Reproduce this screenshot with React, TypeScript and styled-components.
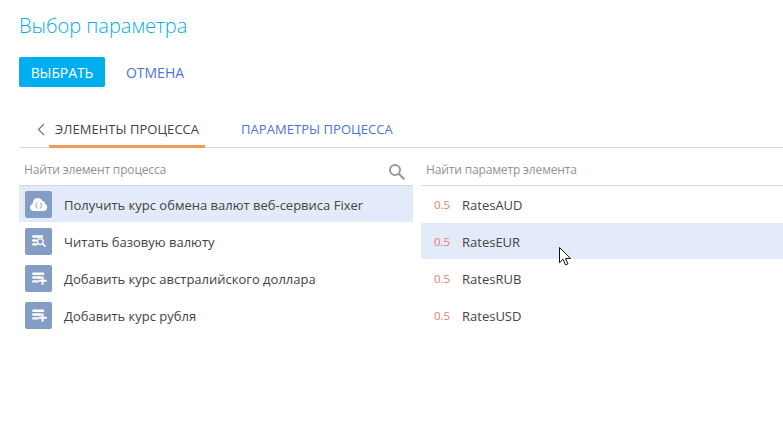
import React from 'react';
import styled, { createGlobalStyle } from 'styled-components';

const GlobalStyle = createGlobalStyle`
  * { box-sizing: border-box; }
  body { margin: 0; background: #fff; overflow: hidden; }
`;

const Page = styled.main`
  width: 100vw;
  height: 100vh;
  padding-left: 19px;
  overflow: hidden;
  font-family: 'Open Sans', sans-serif;
  font-size: 13px;
  color: #444;
`;

const Title = styled.h1`
  margin: 0;
  padding-top: 11px;
  height: 57px;
  font-size: 20px;
  line-height: 30px;
  font-weight: 300;
  color: #00aeef;
`;

const Actions = styled.div`
  display: flex;
  gap: 9px;
`;

const Button = styled.button<{ $primary?: boolean }>`
  width: ${(p) => (p.$primary ? 86 : 82)}px;
  height: 30px;
  padding: 2px 0 0;
  border: 0;
  border-radius: 2px;
  font: 14px/28px 'Open Sans', sans-serif;
  font-weight: ${(p) => (p.$primary ? 500 : 400)};
  white-space: nowrap;
  letter-spacing: ${(p) => (p.$primary ? -0.1 : 0)}px;
  color: ${(p) => (p.$primary ? '#fff' : '#4f74d9')};
  background: ${(p) => (p.$primary ? '#00aeef' : 'transparent')};
`;

const Tabs = styled.nav`
  display: flex;
  height: 36px;
  margin-top: 25px;
  padding-left: 17px;
  border-bottom: 1px solid #d9d9d9;
`;

const Back = styled.svg`
  width: 13px;
  height: 14px;
  margin-top: 10px;
`;

const Tab = styled.div<{ $active?: boolean }>`
  height: 36px;
  padding: 0 6px;
  line-height: 35px;
  white-space: nowrap;
  margin-right: 30px;
  letter-spacing: 0.04px;
  color: ${(p) => (p.$active ? '#444' : '#4f74d9')};
  border-bottom: 3px solid ${(p) => (p.$active ? '#f09a54' : 'transparent')};
`;

const Columns = styled.div`
  display: grid;
  grid-template-columns: 394px 1fr;
  column-gap: 8px;
`;

const Search = styled.div`
  display: flex;
  justify-content: space-between;
  height: 38px;
  padding: 0 7px 0 5px;
  border-bottom: 1px solid #d9d9d9;
  font-size: 12px;
  line-height: 44px;
  letter-spacing: -0.15px;
  color: #929292;
`;

const Lens = styled.svg`
  width: 18px;
  height: 18px;
  margin-top: 15px;
`;

const Row = styled.div<{ $selected?: boolean }>`
  display: flex;
  align-items: center;
  height: 36px;
  margin-bottom: 1px;
  padding-left: 6px;
  white-space: nowrap;
  background: ${(p) => (p.$selected ? '#e3eafa' : 'transparent')};
`;

const Tile = styled.svg`
  width: 27px;
  height: 27px;
  margin-right: 12px;
`;

const Kind = styled.span`
  width: 35px;
  padding-left: 7px;
  font-size: 11.5px;
  letter-spacing: -0.1px;
  color: #f1786b;
`;

const Label = styled.span`
  padding-top: 2px;
`;

const Pointer = styled.svg`
  position: absolute;
  left: 558px;
  top: 246px;
  width: 14px;
  height: 21px;
`;

type IconKind = 'cloud' | 'read' | 'add';

function ElementIcon({ kind }: { kind: IconKind }) {
  return (
    <Tile viewBox="0 0 27 27">
      <rect width="27" height="27" rx="2" fill="#849dc4" />
      {kind === 'cloud' && (
        <>
          <path d="M8.6 20C6.5 20 5 18.4 5 16.4c0-1.8 1.1-3.1 2.7-3.5C7.6 9.4 9.8 7 12.7 7c2.2 0 3.9 1.1 4.6 3.1 1.7.1 2.8 1.3 2.8 2.9 1.3.6 2.1 1.8 2.1 3.2 0 2.2-1.6 3.8-3.8 3.8z" fill="#fff" />
          <path d="M12.4 11.7c-1.1 0-1 .8-1 1.5s-.3 1.1-.9 1.3c.6.2.9.6.9 1.3s-.1 1.5 1 1.5M15 11.7c1.1 0 1 .8 1 1.5s.3 1.1.9 1.3c-.6.2-.9.6-.9 1.3s.1 1.5-1 1.5" fill="none" stroke="#849dc4" />
        </>
      )}
      {kind === 'read' && (
        <g fill="none" stroke="#fff">
          <path d="M8.2 8.5h9M8.2 12.5h2.6M8.2 16.4h3.4" strokeWidth="2.3" strokeLinecap="round" />
          <circle cx="15.3" cy="13.6" r="2.9" strokeWidth="1.3" />
          <path d="M17.3 15.6l3.3 3.1" strokeWidth="1.6" />
        </g>
      )}
      {kind === 'add' && (
        <g fill="none" stroke="#fff">
          <path d="M8.3 8.7h9.8M8.3 12.5h7.3M8.3 16.4h4.2" strokeWidth="2.4" strokeLinecap="round" />
          <path d="M17.6 11.6v8.2M13.6 15.7h8.1" strokeWidth="2" />
        </g>
      )}
    </Tile>
  );
}

const elements: { kind: IconKind; text: string }[] = [
  { kind: 'cloud', text: 'Получить курс обмена валют веб-сервиса Fixer' },
  { kind: 'read', text: 'Читать базовую валюту' },
  { kind: 'add', text: 'Добавить курс австралийского доллара' },
  { kind: 'add', text: 'Добавить курс рубля' },
];

const parameters = ['RatesAUD', 'RatesEUR', 'RatesRUB', 'RatesUSD'];

export default function App() {
  return (
    <Page>
      <GlobalStyle />
      <Title>Выбор параметра</Title>
      <Actions>
        <Button $primary>ВЫБРАТЬ</Button>
        <Button>ОТМЕНА</Button>
      </Actions>
      <Tabs>
        <Back viewBox="0 0 13 14">
          <path d="M8 2L2.5 7.5 8 13" fill="none" stroke="#777" strokeWidth="1.2" />
        </Back>
        <Tab $active>ЭЛЕМЕНТЫ ПРОЦЕССА</Tab>
        <Tab>ПАРАМЕТРЫ ПРОЦЕССА</Tab>
      </Tabs>
      <Columns>
        <section>
          <Search>
            <span>Найти элемент процесса</span>
            <Lens viewBox="0 0 18 18">
              <g fill="none" stroke="#999" strokeWidth="2">
                <circle cx="7" cy="7" r="5" />
                <path d="M10.5 10.5l5.8 5.8" strokeWidth="2.2" />
              </g>
            </Lens>
          </Search>
          {elements.map((item, i) => (
            <Row key={item.text} $selected={i === 0}>
              <ElementIcon kind={item.kind} />
              <Label>{item.text}</Label>
            </Row>
          ))}
        </section>
        <section>
          <Search>
            <span>Найти параметр элемента</span>
          </Search>
          {parameters.map((name, i) => (
            <Row key={name} $selected={i === 1}>
              <Kind>0.5</Kind>
              <Label>{name}</Label>
            </Row>
          ))}
        </section>
      </Columns>
      <Pointer viewBox="0 0 14 21">
        <path d="M1.5 1.5v15.2l3.6-3.4 2.4 5.6 2.4-1-2.4-5.5h5z" fill="#fff" stroke="#111" />
      </Pointer>
    </Page>
  );
}
